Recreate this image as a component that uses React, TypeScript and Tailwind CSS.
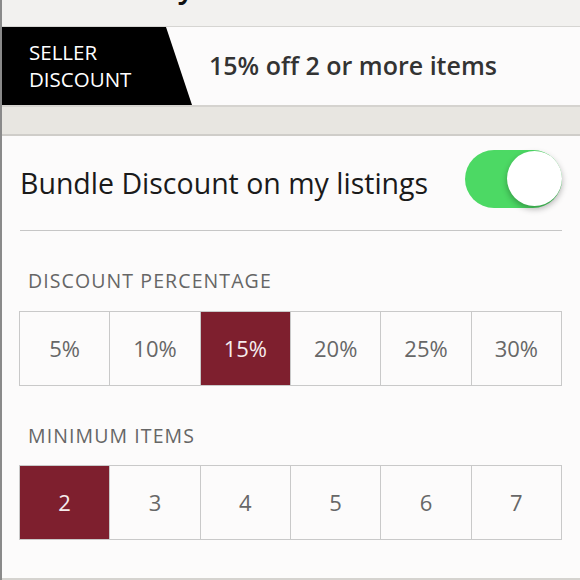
import React from "react";

const percentages = ["5%", "10%", "15%", "20%", "25%", "30%"];
const minimums = ["2", "3", "4", "5", "6", "7"];

function OptionGrid({ options, selected }: { options: string[]; selected: string }) {
  return (
    <div className="ml-[-1px] grid grid-cols-6 border-l border-t border-[#c9c9c9]">
      {options.map((opt) => (
        <div
          key={opt}
          className={
            opt === selected
              ? "flex h-[74px] items-center justify-center border-r border-b border-[#c9c9c9] bg-[#7e1f2e] text-[22px] text-[#f5eced]"
              : "flex h-[74px] items-center justify-center border-r border-b border-[#c9c9c9] text-[22px] text-[#676767]"
          }
        >
          {opt}
        </div>
      ))}
    </div>
  );
}

function Toggle() {
  return (
    <div className="relative mt-[14px] h-[58px] w-[97px] rounded-full bg-[#4cd964]">
      <div className="absolute right-0 top-[1px] h-[55px] w-[55px] rounded-full bg-white shadow-[0_3px_6px_rgba(0,0,0,0.3)]" />
    </div>
  );
}

export default function App() {
  return (
    <div
      className="h-[580px] w-[580px] overflow-hidden border-l-2 border-[#8a8a8a] bg-[#fcfbfb]"
      style={{ fontFamily: "'Open Sans', Lato, sans-serif" }}
    >
      {/* header, mostly scrolled off */}
      <div className="h-[27px] overflow-hidden border-b border-[#d6d5d2] bg-[#f2f1ef]">
        <div className="mt-[-28px] w-[192px] text-right text-[30px] leading-[30px] font-semibold text-[#111]">
          Policy
        </div>
      </div>

      {/* seller discount banner */}
      <div className="flex h-[80px] items-center border-b-2 border-[#d5d3cf]">
        <div className="flex h-full w-[190px] flex-col justify-center bg-black pl-[27px] text-[20.5px] leading-[27px] text-white [clip-path:polygon(0_0,164px_0,190px_100%,0_100%)]">
          <span>SELLER</span>
          <span>DISCOUNT</span>
        </div>
        <div className="ml-[17px] text-[25px] font-semibold text-[#333]">15% off 2 or more items</div>
      </div>

      <div className="h-[29px] border-b-2 border-[#cfcdc9] bg-[#e8e6e1]" />

      {/* settings card */}
      <div className="border-b-2 border-[#d5d3cf] pl-[18px] pr-[18px]">
        <div className="flex h-[95px] items-start justify-between border-b border-[#c6c6c6]">
          <span className="pt-[27px] text-[28.5px] leading-[40px] text-[#1a1a1a]">Bundle Discount on my listings</span>
          <Toggle />
        </div>

        <div className="pl-[8px] pt-[38px] pb-[18px] text-[19.5px] leading-[24px] tracking-[1.1px] text-[#666]">DISCOUNT PERCENTAGE</div>
        <OptionGrid options={percentages} selected="15%" />

        <div className="pl-[8px] pt-[38px] pb-[17px] text-[19.5px] leading-[24px] tracking-[1.1px] text-[#666]">MINIMUM ITEMS</div>
        <OptionGrid options={minimums} selected="2" />
        <div className="h-[38px]" />
      </div>
    </div>
  );
}
